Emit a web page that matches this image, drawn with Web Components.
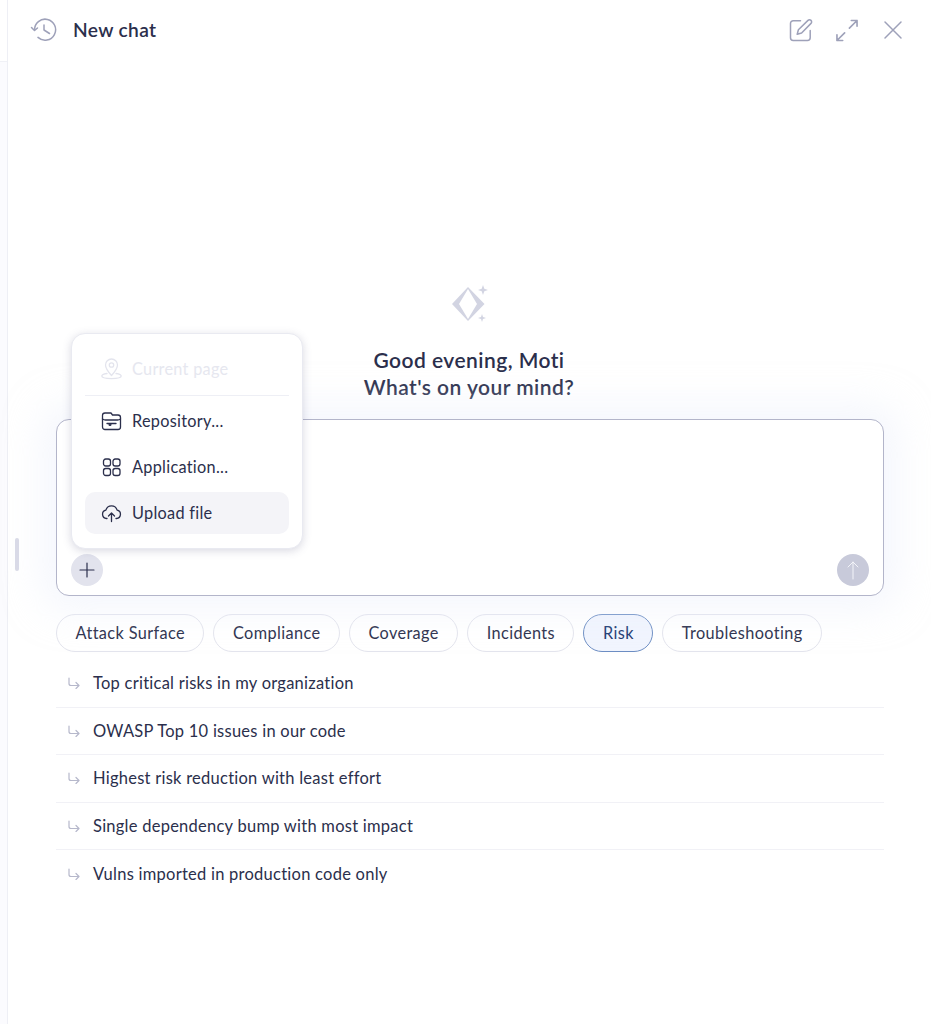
<!DOCTYPE html>
<html lang="en">
<head>
<meta charset="utf-8">
<title>New chat</title>
<style>
    html, body { margin: 0; height: 100%; background: #fff; }
    body { font-family: "Lato", "Noto Sans", sans-serif; color: #2b2f4c; overflow: hidden; }
</style>
</head>
<body>
<chat-panel>
    <chat-header title-text="New chat"></chat-header>
    <chat-greeting name="Moti"></chat-greeting>
    <chat-composer></chat-composer>
    <topic-chips>
        <topic-chip>Attack Surface</topic-chip>
        <topic-chip>Compliance</topic-chip>
        <topic-chip>Coverage</topic-chip>
        <topic-chip>Incidents</topic-chip>
        <topic-chip active>Risk</topic-chip>
        <topic-chip>Troubleshooting</topic-chip>
    </topic-chips>
    <prompt-list>
        <prompt-row>Top critical risks in my organization</prompt-row>
        <prompt-row>OWASP Top 10 issues in our code</prompt-row>
        <prompt-row>Highest risk reduction with least effort</prompt-row>
        <prompt-row>Single dependency bump with most impact</prompt-row>
        <prompt-row>Vulns imported in production code only</prompt-row>
    </prompt-list>
</chat-panel>

<script>
// Small helper so every element sets its shadow markup the same way
class ShadowElement extends HTMLElement {
    constructor(html) {
        super();
        this.attachShadow({ mode: 'open' });
        this.shadowRoot.innerHTML = html;
    }
}

class ChatPanel extends ShadowElement {
    constructor() {
        super(`
            <style>
                :host { display: flex; height: 1024px; position: relative; }
                .rail { width: 7px; flex: none; border-right: 1px solid #eeeff5; position: relative; }
                .rail::after {
                    content: ''; position: absolute; left: 0; right: 0; top: 61px; bottom: 0;
                    background: #fbfbfe; border-top: 1px solid #f0f1f6;
                }
                .handle {
                    position: absolute; left: 15px; top: 538px;
                    width: 4px; height: 33px; border-radius: 2px; background: #d9dae7;
                }
                .main { flex: 1; min-width: 0; display: flex; flex-direction: column; }
            </style>
            <div class="rail"></div>
            <div class="handle"></div>
            <div class="main"><slot></slot></div>
        `);
    }
}

class ChatHeader extends ShadowElement {
    constructor() {
        super(`
            <style>
                :host {
                    display: flex; align-items: center; height: 60px;
                    padding: 0 28px 0 22px; box-sizing: border-box; flex: none;
                }
                svg { display: block; fill: none; stroke: #9ea1b9; stroke-width: 1.5; stroke-linecap: round; stroke-linejoin: round; }
                .title { margin-left: 16px; font-size: 19.2px; font-weight: 600; color: #2b2f4c; flex: 1; letter-spacing: .35px; margin-bottom: 2px; }
                .actions { display: flex; align-items: center; gap: 23px; }
            </style>
            <svg width="27" height="26" viewBox="0 0 27 26">
                <path d="M4.6 13A10.5 10.5 0 1 1 8 20.4"/>
                <path d="M1.5 10.5l3 3 3-2.5"/>
                <path d="M14 8v5l5.500 3.500"/>
            </svg>
            <div class="title"></div>
            <div class="actions">
                <svg width="24" height="24" viewBox="0 0 24 24">
                    <path d="M11.5 2.8H4.2A2.7 2.7 0 0 0 1.5 5.5v14.3a2.7 2.7 0 0 0 2.7 2.7h14.3a2.7 2.7 0 0 0 2.7-2.7v-7.3"/>
                    <path d="M19 2.4a2.1 2.1 0 0 1 3 3L12.6 15l-4.4 1.2 1.2-4.4z"/>
                </svg>
                <svg width="22" height="23" viewBox="0 0 23 23">
                    <path d="M14 9L22 1M16 1h6v6" stroke-width="1.7"/>
                    <path d="M9 14L1 22M1 16v6h6" stroke-width="1.7"/>
                </svg>
                <svg width="20" height="20" viewBox="0 0 20 20" style="margin-left:2px">
                    <path d="M2 2l16 16M18 2L2 18"/>
                </svg>
            </div>
        `);
    }

    connectedCallback() {
        this.shadowRoot.querySelector('.title').textContent = this.getAttribute('title-text');
    }
}

class ChatGreeting extends ShadowElement {
    constructor() {
        super(`
            <style>
                :host {
                    display: flex; flex-direction: column; align-items: center; flex: none;
                    padding: 225px 0 1px; margin-left: -1px;
                    font-size: 21px; line-height: 27px; font-weight: 600; color: #2b2f4c; letter-spacing: .46px;
                }
                svg { display: block; margin-bottom: 23px; margin-left: 1px; }
                .line { text-align: center; }
            </style>
            <svg width="38" height="38" viewBox="0 0 38 38">
                <path fill="#d2d4e2" fill-rule="evenodd" d="M17 2L33.500 19 17 36 1 19zM17 4L8 19l9 15 9-15z"/>
                <path fill="#d2d4e2" d="M32 0l1.300 3.700 3.700 1.300-3.700 1.300-1.300 3.700-1.300-3.700-3.700-1.300 3.700-1.300z"/>
                <path fill="#d2d4e2" d="M31 29l1 3 3 1-3 1-1 3-1-3-3-1 3-1z"/>
            </svg>
            <div class="line" id="hello"></div>
            <div class="line">What's on your mind?</div>
        `);
    }

    connectedCallback() {
        this.shadowRoot.getElementById('hello').textContent = 'Good evening, ' + this.getAttribute('name');
    }
}

class ChatComposer extends ShadowElement {
    constructor() {
        super(`
            <style>
                :host {
                    display: block; position: relative; flex: none; box-sizing: border-box;
                    margin: 18px 47px 0 48px; height: 177px;
                    border: 1px solid #b3b5ca; border-radius: 13px; background: #fff;
                    box-shadow: 0 0 36px 14px rgba(236, 239, 252, .5);
                }
                .tools {
                    position: absolute; left: 14px; right: 14px; bottom: 9px;
                    display: flex; justify-content: space-between;
                }
                .round { width: 32px; height: 32px; border-radius: 50%; display: flex; align-items: center; justify-content: center; }
                .plus { background: #e2e3ed; }
                .send { background: #c8cada; }
                svg { display: block; fill: none; stroke-linecap: round; stroke-linejoin: round; }
            </style>
            <div class="tools">
                <div class="round plus">
                    <svg width="16" height="16" viewBox="0 0 16 16" stroke="#2b2f4c" stroke-width="1.2"><path d="M8 1v14M1 8h14"/></svg>
                </div>
                <div class="round send">
                    <svg width="14" height="20" viewBox="0 0 14 20" stroke="#f3f4f9" stroke-width="1"><path d="M7 19V2M2 7l5-5 5 5"/></svg>
                </div>
            </div>
            <attach-menu></attach-menu>
        `);
    }
}

class AttachMenu extends ShadowElement {
    constructor() {
        super(`
            <style>
                :host {
                    display: block; position: absolute; left: 14px; top: -87px; width: 232px;
                    box-sizing: border-box; height: 216px; padding: 13px;
                    background: #fff; border-radius: 14px; border: 1px solid #e9eaf1;
                    box-shadow: 0 2px 8px rgba(80, 84, 125, .22);
                    font-size: 16.3px; color: #2b2f4c; letter-spacing: .28px;
                }
                .item { display: flex; align-items: center; height: 42px; padding-left: 16px; gap: 10px; border-radius: 10px; margin-bottom: 4px; }
                .item span { margin-bottom: 2px; }
                .item.off { color: #e6e7ef; height: 43px; margin-bottom: 5px; }
                .item.off span { margin-bottom: 0; }
                .item.on { background: #f4f4f8; margin-bottom: 0; }
                .sep { height: 1px; background: #eeeff5; margin-bottom: 4px; }
                svg { display: block; flex: none; fill: none; stroke: currentColor; stroke-width: 1.3; stroke-linecap: round; stroke-linejoin: round; }
                .off svg { stroke: #e3e4ed; }
            </style>
            <div class="item off">
                <svg width="21" height="23" viewBox="0 0 21 23">
                    <path d="M10.500 18.500c-3.500-3.800-6-7-6-10.500a6 6 0 0 1 12 0c0 3.500-2.500 6.700-6 10.500z"/>
                    <circle cx="10.500" cy="8" r="2.200"/>
                    <path d="M6 16.500c-3.500.5-5.200 1.400-5.200 2.600 0 1.500 4.200 2.500 9.700 2.500s9.700-1 9.700-2.500c0-1.200-1.700-2.100-5.200-2.600"/>
                </svg>
                <span>Current page</span>
            </div>
            <div class="sep"></div>
            <div class="item">
                <svg width="21" height="20" viewBox="0 0 21 20">
                    <path d="M1.500 8V4.500A2.500 2.500 0 0 1 4 2h6l1.500 2H17a2.500 2.500 0 0 1 2.500 2.500V16a2.500 2.500 0 0 1-2.500 2.500H4A2.500 2.500 0 0 1 1.500 16z"/>
                    <path d="M1.500 8c1 .8 2 1 3 1h12c1 0 2-.2 3-1"/>
                    <path d="M6 12.500h9"/>
                    <circle cx="9" cy="13.500" r=".9"/>
                </svg>
                <span>Repository...</span>
            </div>
            <div class="item">
                <svg width="21" height="20" viewBox="0 0 21 20">
                    <rect x="2.500" y="2" width="7" height="7" rx="2.200"/>
                    <rect x="12" y="2" width="7" height="7" rx="2.200"/>
                    <rect x="2.500" y="11.500" width="7" height="7" rx="2.200"/>
                    <rect x="12" y="11.500" width="7" height="7" rx="2.200"/>
                </svg>
                <span>Application...</span>
            </div>
            <div class="item on">
                <svg width="21" height="20" viewBox="0 0 21 20">
                    <path d="M6 15.500H5.500a4.200 4.200 0 0 1-.6-8.300 5.800 5.800 0 0 1 11.200 0 4.200 4.200 0 0 1-.6 8.300H15"/>
                    <path d="M10.500 18.500v-8M7.500 13l3-3 3 3"/>
                </svg>
                <span>Upload file</span>
            </div>
        `);
    }
}

class TopicChips extends ShadowElement {
    constructor() {
        super(`
            <style>
                :host { display: flex; gap: 9px; margin: 18px 47px 0 48px; flex: none; }
            </style>
            <slot></slot>
        `);
    }
}

class TopicChip extends ShadowElement {
    constructor() {
        super(`
            <style>
                :host {
                    display: flex; align-items: center; height: 38px; box-sizing: border-box; padding: 0 18.500px 2px;
                    border: 1px solid #e4e5ee; border-radius: 19px; background: #fff;
                    font-size: 16.3px; color: #2b2f4c; white-space: nowrap; letter-spacing: .38px;
                }
                :host([active]) { background: #f1f5fe; border-color: #6d8ec4; color: #1d3a72; }
            </style>
            <slot></slot>
        `);
    }
}

class PromptList extends ShadowElement {
    constructor() {
        super(`
            <style>
                :host { display: block; margin: 8px 47px 0 48px; flex: none; }
            </style>
            <slot></slot>
        `);
    }
}

class PromptRow extends ShadowElement {
    constructor() {
        super(`
            <style>
                :host {
                    display: flex; align-items: center; height: 47.500px; box-sizing: border-box;
                    padding-left: 12px; gap: 13px;
                    border-bottom: 1px solid #f1f1f6;
                    font-size: 16.5px; color: #2b2f4c; letter-spacing: .25px;
                }
                :host(:last-child) { border-bottom: none; }
                svg { display: block; flex: none; fill: none; stroke: #b6b8cb; stroke-width: 1.2; stroke-linecap: round; stroke-linejoin: round; }
            </style>
            <svg width="12" height="12" viewBox="0 0 12 12"><path d="M1 1v5.500a2 2 0 0 0 2 2h8M8 5.500l3 3-3 3"/></svg>
            <span><slot></slot></span>
        `);
    }
}

customElements.define('chat-panel', ChatPanel);
customElements.define('chat-header', ChatHeader);
customElements.define('chat-greeting', ChatGreeting);
customElements.define('chat-composer', ChatComposer);
customElements.define('attach-menu', AttachMenu);
customElements.define('topic-chips', TopicChips);
customElements.define('topic-chip', TopicChip);
customElements.define('prompt-list', PromptList);
customElements.define('prompt-row', PromptRow);
</script>
</body>
</html>
